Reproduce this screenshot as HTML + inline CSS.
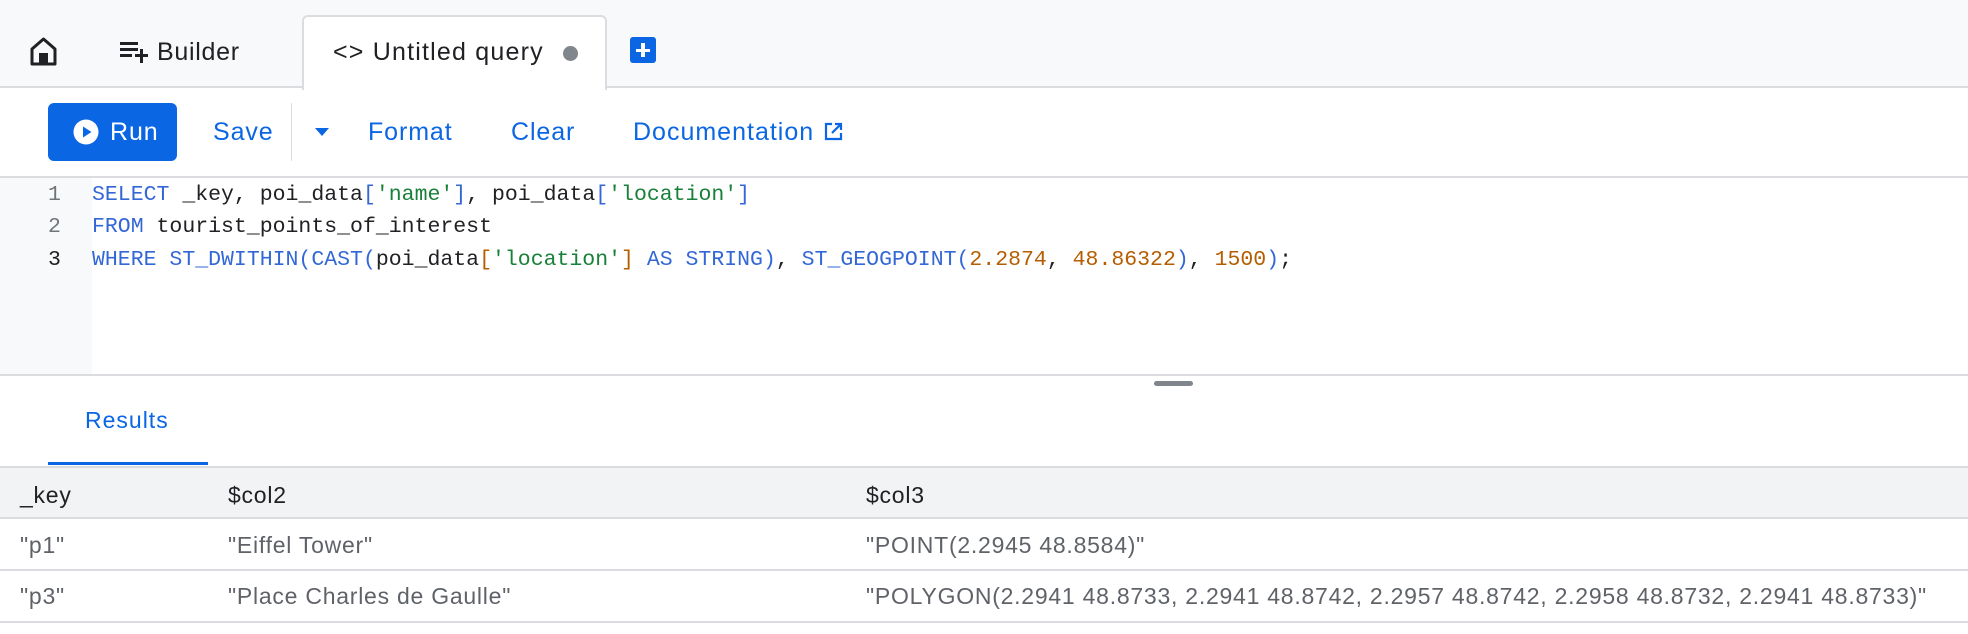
<!DOCTYPE html>
<html><head><meta charset="utf-8"><style>
*{margin:0;padding:0;box-sizing:border-box}
body{width:1968px;height:634px;background:#fff;font-family:"Liberation Sans",Arial,sans-serif;position:relative;overflow:hidden;color:#202124}
.abs{position:absolute}
.tabbar{left:0;top:0;width:1968px;height:88px;background:#f8f9fa;border-bottom:2px solid #dadce0}
.tab{left:302px;top:15px;width:305px;height:75px;background:#fff;border:2px solid #dadce0;border-bottom:none;border-radius:6px 6px 0 0}
.t{white-space:nowrap;line-height:1;letter-spacing:0.9px}
.blue{color:#0b66e4}
.code{font-family:"Liberation Mono",monospace;font-size:21.5px;white-space:pre;line-height:1}
.k{color:#3367d6}.s{color:#188038}.n{color:#b55d00}.b1{color:#3367d6}.b2{color:#b55d00}
.cell{font-size:23px;color:#5f6368;white-space:nowrap;line-height:1;letter-spacing:0.75px}
</style></head><body>
<div class="abs tabbar"></div>
<div class="abs tab"></div>
<svg class="abs" style="left:29px;top:36px" width="29" height="30" viewBox="0 0 29 30"><path d="M3 13 L14.5 3 L26 13 V28 H3 Z" fill="none" stroke="#202124" stroke-width="3" stroke-linejoin="round"/><rect x="10" y="17" width="9" height="11" fill="#202124"/></svg>
<svg class="abs" style="left:120px;top:40px" width="28" height="24" viewBox="0 0 28 24"><rect x="0" y="2" width="18" height="3" fill="#202124"/><rect x="0" y="8" width="18" height="3" fill="#202124"/><rect x="0" y="14" width="12" height="3" fill="#202124"/><rect x="15" y="14" width="13" height="3" fill="#202124"/><rect x="20" y="9" width="3" height="14" fill="#202124"/></svg>
<div class="abs t" style="left:157px;top:40px;font-size:25px;color:#202124;letter-spacing:0.7px">Builder</div>
<div class="abs t" style="left:333px;top:40px;font-size:25px;color:#202124;letter-spacing:1.2px">&lt;&gt; Untitled query</div>
<div class="abs" style="left:563px;top:46px;width:15px;height:15px;border-radius:50%;background:#80868b"></div>
<div class="abs" style="left:630px;top:37px;width:26px;height:26px;border-radius:3px;background:#0b66e4"></div>
<div class="abs" style="left:636px;top:48.5px;width:14px;height:3.5px;background:#fff"></div>
<div class="abs" style="left:641.3px;top:43px;width:3.5px;height:14px;background:#fff"></div>

<div class="abs" style="left:48px;top:103px;width:129px;height:58px;border-radius:6px;background:#0b66e4"></div>
<svg class="abs" style="left:73px;top:119px" width="26" height="26" viewBox="0 0 26 26"><circle cx="13" cy="13" r="12.5" fill="#fff"/><path d="M10 7.5 L18.5 13 L10 18.5 Z" fill="#0b66e4"/></svg>
<div class="abs t" style="left:110px;top:120px;font-size:25px;color:#fff">Run</div>
<div class="abs t blue" style="left:213px;top:120px;font-size:25px">Save</div>
<div class="abs" style="left:291px;top:103px;width:1px;height:58px;background:#dadce0"></div>
<svg class="abs" style="left:314px;top:127px" width="16" height="10"><path d="M1 1 H15 L8 9 Z" fill="#0b66e4"/></svg>
<div class="abs t blue" style="left:368px;top:120px;font-size:25px">Format</div>
<div class="abs t blue" style="left:511px;top:120px;font-size:25px">Clear</div>
<div class="abs t blue" style="left:633px;top:120px;font-size:25px;letter-spacing:1px">Documentation</div>
<svg class="abs" style="left:824px;top:122px" width="19" height="19" viewBox="0 0 19 19"><path d="M8 2 H2 V17 H17 V11" fill="none" stroke="#0b66e4" stroke-width="2.2"/><path d="M11 2 H17 V8 M17 2 L8 11" fill="none" stroke="#0b66e4" stroke-width="2.2"/></svg>
<div class="abs" style="left:0;top:176px;width:1968px;height:2px;background:#dadce0"></div>

<div class="abs" style="left:0;top:178px;width:92px;height:197px;background:#f8f9fa"></div>
<div class="abs code" style="left:48px;top:185px;color:#70757a">1</div>
<div class="abs code" style="left:48px;top:217px;color:#70757a">2</div>
<div class="abs code" style="left:48px;top:250px;color:#202124">3</div>
<div class="abs code" style="left:92px;top:185px"><span class="k">SELECT</span> _key, poi_data<span class="b1">[</span><span class="s">'name'</span><span class="b1">]</span>, poi_data<span class="b1">[</span><span class="s">'location'</span><span class="b1">]</span></div>
<div class="abs code" style="left:92px;top:217px"><span class="k">FROM</span> tourist_points_of_interest</div>
<div class="abs code" style="left:92px;top:250px"><span class="k">WHERE ST_DWITHIN(CAST(</span>poi_data<span class="b2">[</span><span class="s">'location'</span><span class="b2">]</span> <span class="k">AS STRING)</span>, <span class="k">ST_GEOGPOINT(</span><span class="n">2.2874</span>, <span class="n">48.86322</span><span class="k">)</span>, <span class="n">1500</span><span class="k">)</span>;</div>
<div class="abs" style="left:0;top:374px;width:1968px;height:2px;background:#dadce0"></div>
<div class="abs" style="left:1154px;top:381px;width:39px;height:5px;border-radius:3px;background:#80868b"></div>

<div class="abs t blue" style="left:85px;top:409px;font-size:23px;letter-spacing:1px">Results</div>
<div class="abs" style="left:48px;top:462px;width:160px;height:3px;background:#0b66e4"></div>
<div class="abs" style="left:0;top:466px;width:1968px;height:53px;background:#f1f3f4;border-top:2px solid #dadce0;border-bottom:2px solid #dadce0"></div>
<div class="abs cell" style="left:20px;top:484px;color:#202124">_key</div>
<div class="abs cell" style="left:228px;top:484px;color:#202124">$col2</div>
<div class="abs cell" style="left:866px;top:484px;color:#202124">$col3</div>
<div class="abs cell" style="left:20px;top:534px">"p1"</div>
<div class="abs cell" style="left:228px;top:534px">"Eiffel Tower"</div>
<div class="abs cell" style="left:866px;top:534px">"POINT(2.2945 48.8584)"</div>
<div class="abs" style="left:0;top:569px;width:1968px;height:2px;background:#dadce0"></div>
<div class="abs cell" style="left:20px;top:585px">"p3"</div>
<div class="abs cell" style="left:228px;top:585px">"Place Charles de Gaulle"</div>
<div class="abs cell" style="left:866px;top:585px">"POLYGON(2.2941 48.8733, 2.2941 48.8742, 2.2957 48.8742, 2.2958 48.8732, 2.2941 48.8733)"</div>
<div class="abs" style="left:0;top:621px;width:1968px;height:2px;background:#dadce0"></div>
</body></html>
